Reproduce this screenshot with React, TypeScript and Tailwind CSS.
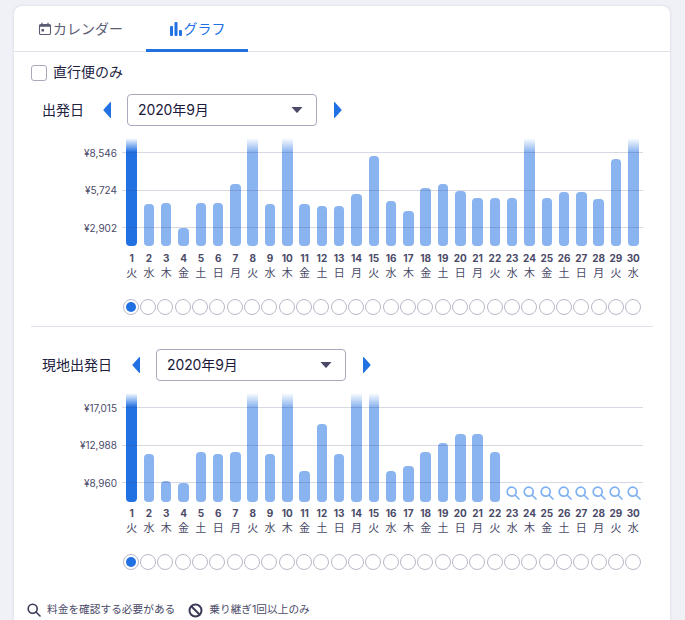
const days = ["火","水","木","金","土","日","月"];
const F = 108;
const chart1 = [F,42,43,18,43,43,62,F,42,F,42,40,40,52,90,45,35,58,62,55,48,48,48,F,48,54,54,47,87,F];
const chart2 = [F,48,21,19,50,48,50,F,48,F,31,78,48,F,F,31,36,50,59,68,68,50,0,0,0,0,0,0,0,0];

function Arrow({ dir }: { dir: "l" | "r" }) {
  return (
    <svg width="9" height="16" viewBox="0 0 9 16" className={dir === "r" ? "rotate-180" : ""}>
      <path d="M8 .5V15.5a.5.5 0 0 1-.9.3L.6 8.6a1 1 0 0 1 0-1.2L7.100.2A.5.5 0 0 1 8 .5Z" fill="#2271e3" />
    </svg>
  );
}

function Glass({ color, size, sw }: { color: string; size: number; sw: number }) {
  return (
    <svg width={size} height={size} viewBox="0 0 14 14" fill="none" stroke={color} strokeWidth={sw} strokeLinecap="round">
      <circle cx="5.700" cy="5.700" r="4.500" />
      <path d="M9 9l4 4" />
    </svg>
  );
}

function DateRow({ label, labelW }: { label: string; labelW: string }) {
  return (
    <div className="flex items-center">
      <span className={`pl-[11px] text-[14px] leading-[20px] text-[#22223f] ${labelW}`}>{label}</span>
      <Arrow dir="l" />
      <div className="ml-[15px] flex h-[32px] w-[190px] items-center justify-between rounded-[4px] border border-[#a9a9bd] bg-white pl-[10px] pr-[13px] text-[14px] text-[#1a1a3a]">
        <span className="-mt-[1px] tracking-[-0.1px]">2020年9月</span>
        <svg width="12" height="6" viewBox="0 0 12 6"><path d="M.5 0h11L6.600 5.500a.8.8 0 0 1-1.200 0Z" fill="#4a4a68" /></svg>
      </div>
      <span className="ml-[16px] flex"><Arrow dir="r" /></span>
    </div>
  );
}

function Chart({ data, prices, tall }: { data: number[]; prices: string[]; tall?: boolean }) {
  return (
    <div className="w-[611px]">
      <div className={`relative flex items-end pl-[92px] ${tall ? "h-[109px]" : "h-[108px]"}`}>
        {data.map((h, i) => (
          <div key={i} className="flex h-full flex-1 items-end justify-center">
            {h === 0 ? (
              <div className="mb-[2px] ml-[1px]"><Glass color="#7fb0f0" size={14} sw={1.7} /></div>
            ) : h === F ? (
              <div
                className={`h-full w-[10.500px] rounded-b-[4px] ${i === 0 ? "bg-[linear-gradient(to_bottom,#ffffff30,#2271e3_14px)]" : "bg-[linear-gradient(to_bottom,#ffffff30,#8ab4f0_14px)]"}`}
              />
            ) : (
              <div className="w-[10.500px] rounded-[4px] bg-[#8ab4f0]" style={{ height: h }} />
            )}
          </div>
        ))}
        <div className="absolute inset-x-0 top-[14px] flex flex-col gap-[36.500px]">
          {prices.map((p) => (
            <div key={p} className="flex h-px items-center">
              <span className="w-[86px] shrink-0 text-right text-[10px] leading-none text-[#4a4a68]">{p}</span>
              <span className="ml-[5px] mr-[-1px] h-px flex-1 bg-[#3c3c6e]/20" />
            </div>
          ))}
        </div>
      </div>
      <div className={`flex pl-[92px] text-center text-[#4a4a68] ${tall ? "mt-[4px]" : "mt-[5px]"}`}>
        {data.map((_, i) => (
          <div key={i} className="flex flex-1 flex-col items-center">
            <span className="whitespace-nowrap text-[10px] font-bold leading-[14px]">{i + 1}</span>
            <span className="mt-[1px] text-[11px] leading-[14px]">{days[i % 7]}</span>
          </div>
        ))}
      </div>
      <div className="mt-[19px] flex pl-[91px]">
        {data.map((_, i) => (
          <div key={i} className="flex flex-1 justify-center">
            <div className="flex h-[16px] w-[16px] shrink-0 items-center justify-center rounded-full border border-[#b9b9c9] bg-white">
              {i === 0 && <div className="h-[10px] w-[10px] rounded-full bg-[#2271e3]" />}
            </div>
          </div>
        ))}
      </div>
    </div>
  );
}

export default function App() {
  return (
    <div className="h-[620px] w-[685px] overflow-hidden bg-[#eff1f6] pl-[14px] pt-[6px] font-['Inter','Noto_Sans_CJK_JP',sans-serif]">
      <div className="h-[640px] w-[656px] rounded-t-[8px] bg-white shadow-[0_0_3px_rgba(60,60,110,0.15)]">
        <div className="flex h-[46px] border-b border-[#dfe0e8] pl-[1px]">
          <div className="flex h-[45px] items-center gap-[1px] px-[23px] text-[14px] text-[#5c5c74]">
            <svg width="14" height="14" viewBox="0 0 14 14" fill="none">
              <rect x="1.500" y="2.500" width="11" height="10" rx="1.200" stroke="#5c5c74" strokeWidth="1.100" />
              <path d="M1.500 3h11v1.800h-11z" fill="#5c5c74" />
              <path d="M4 1v2M10 1v2" stroke="#5c5c74" strokeWidth="1.200" strokeLinecap="round" />
              <rect x="3.500" y="7" width="2.500" height="2.500" fill="#5c5c74" />
            </svg>
            <span>カレンダー</span>
          </div>
          <div className="flex h-[46px] w-[102px] items-center justify-center gap-[1px] border-b-[3px] border-[#2271e3] pt-[2px] text-[14px] text-[#2271e3]">
            <svg width="14" height="14" viewBox="0 0 14 14" fill="#2271e3">
              <rect x="1" y="4" width="3" height="10" rx="1" />
              <rect x="5.500" y="0" width="3" height="14" rx="1" />
              <rect x="10" y="8" width="3" height="6" rx="1" />
            </svg>
            <span>グラフ</span>
          </div>
        </div>
        <div className="pl-[17px] pt-[13px]">
          <label className="flex h-[16px] items-center">
            <span className="h-[16px] w-[16px] rounded-[3px] border border-[#a9a9bd] bg-white" />
            <span className="-mt-[2px] ml-[6px] text-[14px] leading-[16px] text-[#22223f]">直行便のみ</span>
          </label>
          <div className="mt-[13px]"><DateRow label="出発日" labelW="w-[72px]" /></div>
          <div className="mt-[12px]"><Chart data={chart1} prices={["¥8,546","¥5,724","¥2,902"]} /></div>
          <div className="mt-[11px] h-px w-[622px] bg-[#dfe0e8]" />
          <div className="mt-[22px]"><DateRow label="現地出発日" labelW="w-[101px]" /></div>
          <div className="mt-[12px]"><Chart tall data={chart2} prices={["¥17,015","¥12,988","¥8,960"]} /></div>
          <div className="-ml-[4px] mt-[32px] flex items-center text-[10.700px] text-[#4a4a68]">
            <Glass color="#3a3a58" size={14} sw={1.6} />
            <span className="ml-[6px]">料金を確認する必要がある</span>
            <svg className="ml-[13px]" width="15" height="15" viewBox="0 0 15 15" fill="none" stroke="#3a3a58" strokeWidth="2">
              <circle cx="7.500" cy="7.500" r="6" />
              <path d="M3.500 3.500l8 8" />
            </svg>
            <span className="ml-[6px]">乗り継ぎ1回以上のみ</span>
          </div>
        </div>
      </div>
    </div>
  );
}
